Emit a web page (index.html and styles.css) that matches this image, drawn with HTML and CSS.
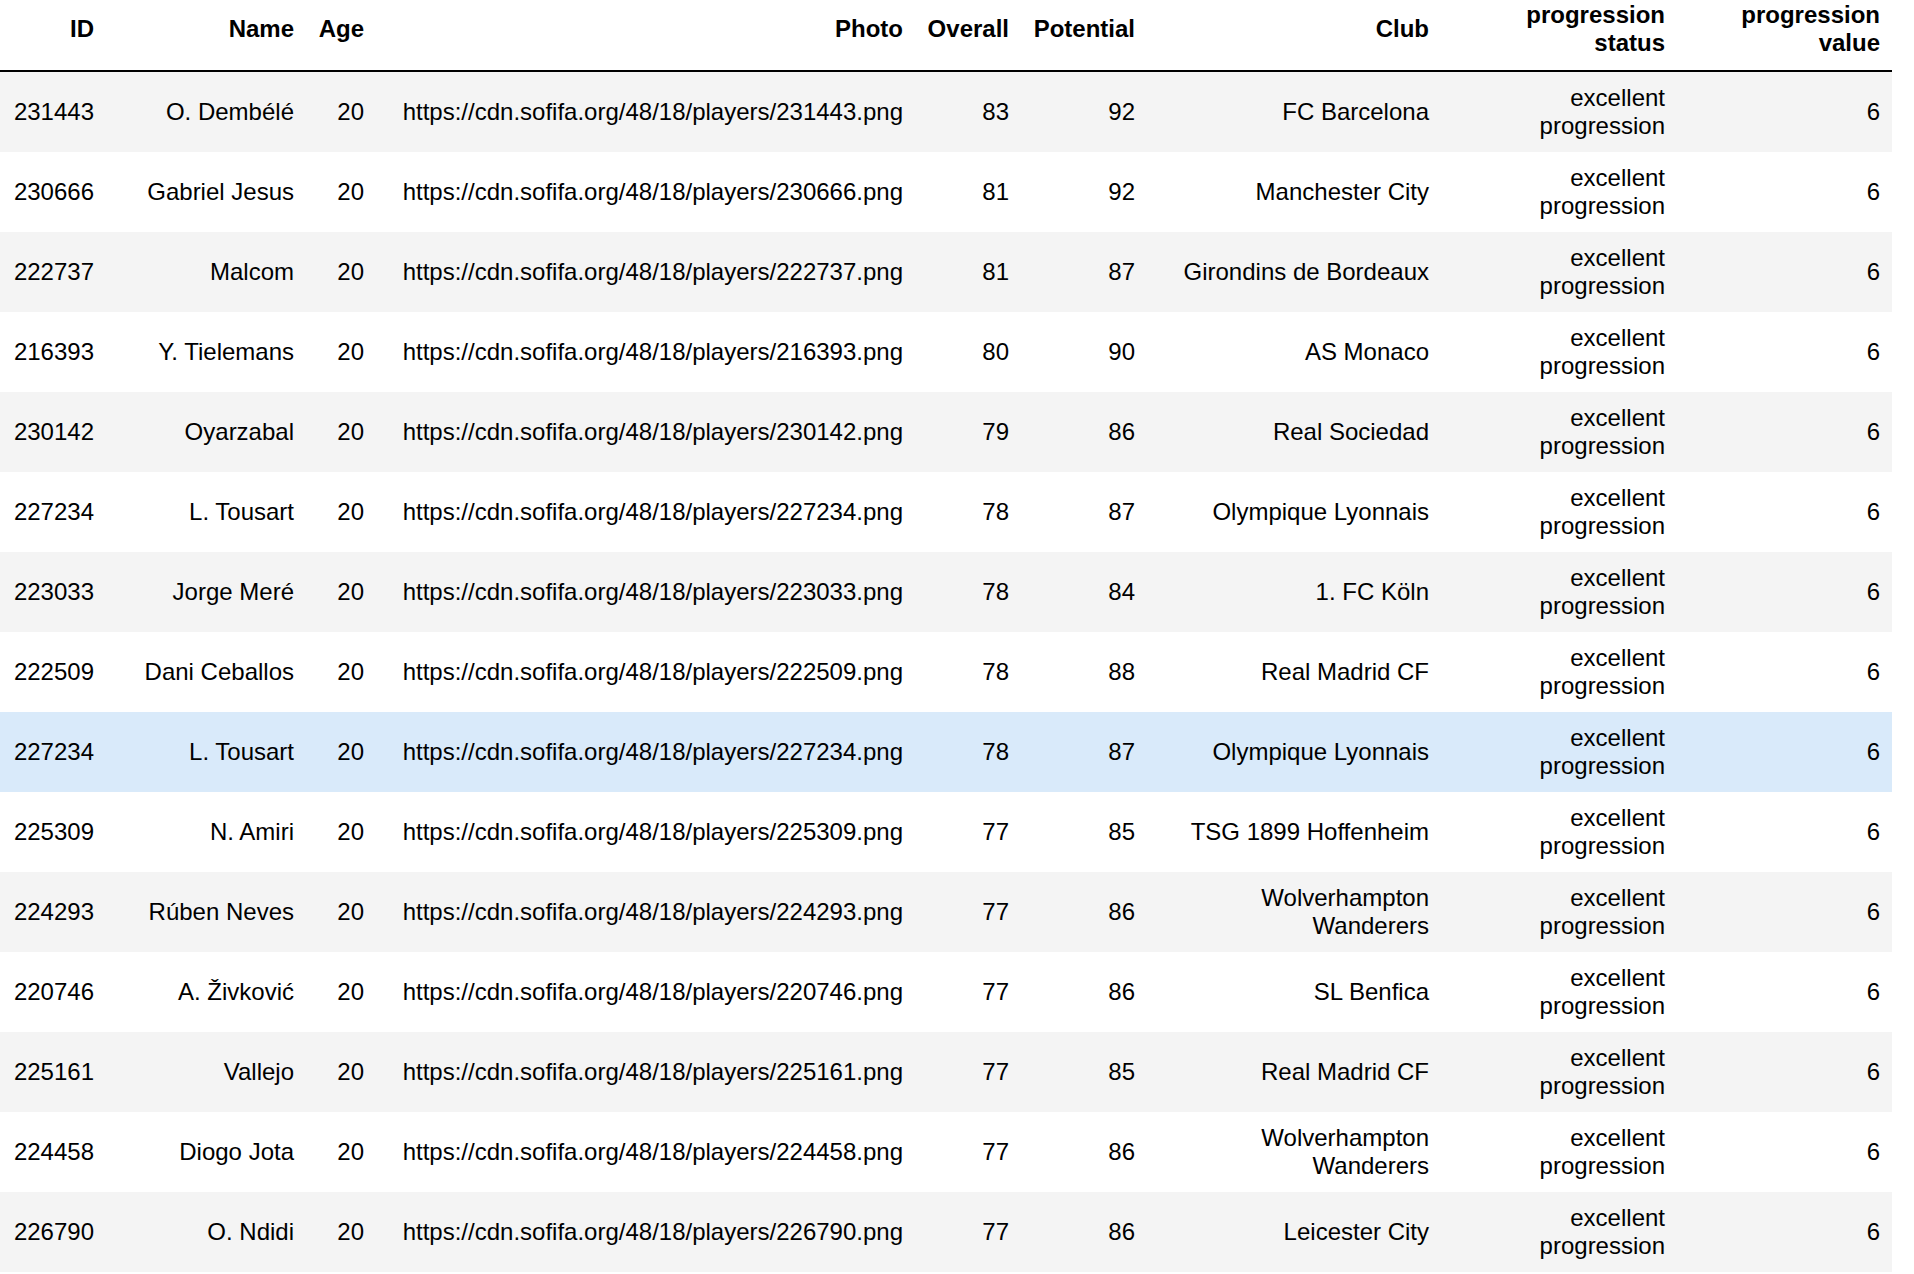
FILE: index.html
```html
<!DOCTYPE html>
<html>
<head>
<meta charset="utf-8">
<link rel="stylesheet" href="styles.css">
</head>
<body>
<table class="df">
  <colgroup>
    <col class="c-id"><col class="c-name"><col class="c-age"><col class="c-photo"><col class="c-overall"><col class="c-pot"><col class="c-club"><col class="c-status"><col class="c-value">
  </colgroup>
  <thead>
    <tr><th>ID</th><th>Name</th><th>Age</th><th>Photo</th><th>Overall</th><th>Potential</th><th>Club</th><th>progression status</th><th>progression value</th></tr>
  </thead>
  <tbody>
    <tr><td>231443</td><td>O. Dembélé</td><td>20</td><td class="url">https://cdn.sofifa.org/48/18/players/231443.png</td><td>83</td><td>92</td><td>FC Barcelona</td><td>excellent progression</td><td>6</td></tr>
    <tr><td>230666</td><td>Gabriel Jesus</td><td>20</td><td class="url">https://cdn.sofifa.org/48/18/players/230666.png</td><td>81</td><td>92</td><td>Manchester City</td><td>excellent progression</td><td>6</td></tr>
    <tr><td>222737</td><td>Malcom</td><td>20</td><td class="url">https://cdn.sofifa.org/48/18/players/222737.png</td><td>81</td><td>87</td><td>Girondins de Bordeaux</td><td>excellent progression</td><td>6</td></tr>
    <tr><td>216393</td><td>Y. Tielemans</td><td>20</td><td class="url">https://cdn.sofifa.org/48/18/players/216393.png</td><td>80</td><td>90</td><td>AS Monaco</td><td>excellent progression</td><td>6</td></tr>
    <tr><td>230142</td><td>Oyarzabal</td><td>20</td><td class="url">https://cdn.sofifa.org/48/18/players/230142.png</td><td>79</td><td>86</td><td>Real Sociedad</td><td>excellent progression</td><td>6</td></tr>
    <tr><td>227234</td><td>L. Tousart</td><td>20</td><td class="url">https://cdn.sofifa.org/48/18/players/227234.png</td><td>78</td><td>87</td><td>Olympique Lyonnais</td><td>excellent progression</td><td>6</td></tr>
    <tr><td>223033</td><td>Jorge Meré</td><td>20</td><td class="url">https://cdn.sofifa.org/48/18/players/223033.png</td><td>78</td><td>84</td><td>1. FC Köln</td><td>excellent progression</td><td>6</td></tr>
    <tr><td>222509</td><td>Dani Ceballos</td><td>20</td><td class="url">https://cdn.sofifa.org/48/18/players/222509.png</td><td>78</td><td>88</td><td>Real Madrid CF</td><td>excellent progression</td><td>6</td></tr>
    <tr class="hover"><td>227234</td><td>L. Tousart</td><td>20</td><td class="url">https://cdn.sofifa.org/48/18/players/227234.png</td><td>78</td><td>87</td><td>Olympique Lyonnais</td><td>excellent progression</td><td>6</td></tr>
    <tr><td>225309</td><td>N. Amiri</td><td>20</td><td class="url">https://cdn.sofifa.org/48/18/players/225309.png</td><td>77</td><td>85</td><td>TSG 1899 Hoffenheim</td><td>excellent progression</td><td>6</td></tr>
    <tr><td>224293</td><td>Rúben Neves</td><td>20</td><td class="url">https://cdn.sofifa.org/48/18/players/224293.png</td><td>77</td><td>86</td><td>Wolverhampton Wanderers</td><td>excellent progression</td><td>6</td></tr>
    <tr><td>220746</td><td>A. Živković</td><td>20</td><td class="url">https://cdn.sofifa.org/48/18/players/220746.png</td><td>77</td><td>86</td><td>SL Benfica</td><td>excellent progression</td><td>6</td></tr>
    <tr><td>225161</td><td>Vallejo</td><td>20</td><td class="url">https://cdn.sofifa.org/48/18/players/225161.png</td><td>77</td><td>85</td><td>Real Madrid CF</td><td>excellent progression</td><td>6</td></tr>
    <tr><td>224458</td><td>Diogo Jota</td><td>20</td><td class="url">https://cdn.sofifa.org/48/18/players/224458.png</td><td>77</td><td>86</td><td>Wolverhampton Wanderers</td><td>excellent progression</td><td>6</td></tr>
    <tr><td>226790</td><td>O. Ndidi</td><td>20</td><td class="url">https://cdn.sofifa.org/48/18/players/226790.png</td><td>77</td><td>86</td><td>Leicester City</td><td>excellent progression</td><td>6</td></tr>
  </tbody>
</table>
</body>
</html>
```

FILE: styles.css
```css
html, body {
  margin: 0;
  padding: 0;
  background: #ffffff;
}

body {
  font-family: "Liberation Sans", Arial, Helvetica, sans-serif;
  font-size: 24px;
  line-height: 28px;
  color: #000000;
  overflow: hidden;
}

.df {
  width: 1892px;
  table-layout: fixed;
  border-collapse: collapse;
  border-spacing: 0;
  margin-top: -10px;
}

.c-id { width: 106px; }
.c-name { width: 200px; }
.c-age { width: 70px; }
.c-photo { width: 539px; }
.c-overall { width: 106px; }
.c-pot { width: 126px; }
.c-club { width: 294px; }
.c-status { width: 236px; }
.c-value { width: 215px; }

.df th,
.df td {
  text-align: right;
  vertical-align: middle;
  padding: 12px;
  border: none;
}

.df th {
  font-weight: bold;
  height: 56px;
  padding-top: 11px;
  padding-bottom: 13px;
  border-bottom: 2px solid #000000;
}

.df td {
  height: 56px;
}

.df .url {
  white-space: nowrap;
}

.df tbody tr:nth-child(odd) {
  background: #f4f4f4;
}

.df tbody tr.hover {
  background: #d9eafa;
}
```
